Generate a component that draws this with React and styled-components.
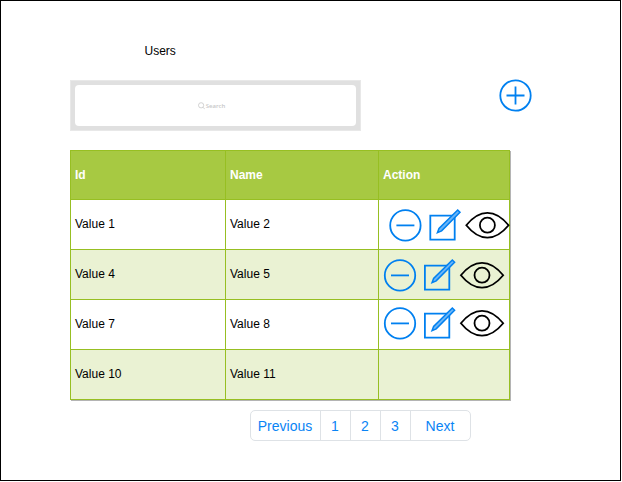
import React from "react";
import styled, { createGlobalStyle } from "styled-components";

const GlobalStyle = createGlobalStyle`
  body { margin: 0; background: #fff; }
  *, *::before, *::after { box-sizing: border-box; }
  svg { display: block; flex: none; }
`;

const Frame = styled.main`
  width: 621px;
  height: 481px;
  border: 1px solid #000;
  padding: 42px 88px 0 69px;
  overflow: hidden;
  background: #fff;
  font: 12px/16px "Liberation Sans", Arial, sans-serif;
  color: #000;
`;

const Title = styled.h1`
  margin: 0 0 0 74.5px;
  font: inherit;
  height: 16px;
`;

const Toolbar = styled.div`
  display: flex;
  justify-content: space-between;
  margin-top: 21px;
  height: 51px;
`;

const SearchBar = styled.div`
  width: 291px;
  height: 51px;
  padding: 4px;
  background: #e0e0e0;
  border: 1px solid #e8e8e8;
`;

const SearchField = styled.div`
  display: flex;
  align-items: center;
  justify-content: center;
  gap: 1px;
  height: 41px;
  padding: 0 8px 0 0;
  border-radius: 4px;
  background: #fff;
  color: #c8c8c8;
  font: 600 6px/8px "Open Sans", sans-serif;
`;

const AddButton = styled.button`
  width: 34px;
  height: 34px;
  margin-top: -2px;
  padding: 0;
  border: 0;
  background: none;
`;

const Table = styled.div`
  display: grid;
  grid-template-columns: 154px 152px 130px;
  grid-template-rows: 48px repeat(4, 49px);
  gap: 1px;
  width: 440px;
  height: 250px;
  margin-top: 19px;
  border: 1px solid #97bf22;
  background: #97bf22;
  box-shadow: 1px 1px 0 #b4b4b4;
`;

const Cell = styled.div`
  display: flex;
  align-items: center;
  padding: 0 0 2px 4px;
  background: ${(p) => (p.$alt ? "#eaf2d3" : "#fff")};
`;

const HeadCell = styled(Cell)`
  padding-bottom: 0;
  background: #a7c942;
  color: #fff;
  font-weight: bold;
`;

const Actions = styled(Cell)`
  align-items: flex-start;
  padding: ${(p) => p.$top}px 0 0 ${(p) => p.$left}px;
`;

const Pagination = styled.nav`
  display: flex;
  width: 221px;
  height: 31px;
  margin: 10px 0 0 180px;
  border: 1px solid #dee2e6;
  border-radius: 5px;
  color: #0a84f5;
  font-size: 14px;
`;

const PageLink = styled.a`
  display: flex;
  align-items: center;
  justify-content: center;
  width: ${(p) => p.$width}px;
  padding-right: 1px;
  & + & { border-left: 1px solid #dee2e6; }
`;

const BLUE = "#0080f0";

const AddIcon = () => (
  <svg width="34" height="34" fill="none" stroke={BLUE} strokeWidth="1.8">
    <circle cx="17.5" cy="17.5" r="15.2" />
    <path d="M8.500 17.500H26.500M17.500 8.500V26.500" />
  </svg>
);

const ActionIcons = ({ shift = 0 }) => (
  <svg width="122" height="34" fill="none" stroke={BLUE} strokeWidth="1.8" overflow="visible">
    <g transform={`translate(${shift} 0.400)`}>
      <circle cx="17" cy="17" r="15.200" />
      <path d="M8 17H26" />
      <path d="M41.900 7.200H66.300V31.300H41.900Z" />
      <path d="M49 24.300L50.600 20L69.300 1.600L71.600 3.900L53.200 22.500Z" fill="#6bb5f7" strokeWidth="1.500" />
      <g stroke="#000">
        <path d="M77.900 16.800C85 8 92 4.400 99 4.400S113 8 120.200 16.800C113 25.600 106 29.200 99 29.200S85 25.600 77.900 16.800Z" />
        <circle cx="99" cy="16.800" r="7.500" />
      </g>
    </g>
  </svg>
);

const SearchIcon = () => (
  <svg width="7" height="8" fill="none" stroke="#c0c0c0" strokeWidth="0.7">
    <circle cx="3.100" cy="3.300" r="2.600" />
    <path d="M5 5.200L6.800 7.200" />
  </svg>
);

const rows = [
  { id: "Value 1", name: "Value 2", left: 9, top: 8, shift: 0.4 },
  { id: "Value 4", name: "Value 5", left: 4, top: 8 },
  { id: "Value 7", name: "Value 8", left: 4, top: 6 },
  { id: "Value 10", name: "Value 11" },
];

const pages = [["Previous", 69], ["1", 30], ["2", 30], ["3", 30], ["Next", 60]];

export default function App() {
  return (
    <>
      <GlobalStyle />
      <Frame>
        <Title>Users</Title>
        <Toolbar>
          <SearchBar>
            <SearchField><SearchIcon />Search</SearchField>
          </SearchBar>
          <AddButton aria-label="Add user"><AddIcon /></AddButton>
        </Toolbar>
        <Table>
          {["Id", "Name", "Action"].map((h) => <HeadCell key={h}>{h}</HeadCell>)}
          {rows.map((r, i) => (
            <React.Fragment key={r.id}>
              <Cell $alt={i % 2 === 1}>{r.id}</Cell>
              <Cell $alt={i % 2 === 1}>{r.name}</Cell>
              <Actions $alt={i % 2 === 1} $left={r.left ?? 0} $top={r.top ?? 0}>
                {r.left !== undefined && <ActionIcons shift={r.shift} />}
              </Actions>
            </React.Fragment>
          ))}
        </Table>
        <Pagination>
          {pages.map(([label, width]) => <PageLink key={label} $width={width}>{label}</PageLink>)}
        </Pagination>
      </Frame>
    </>
  );
}
